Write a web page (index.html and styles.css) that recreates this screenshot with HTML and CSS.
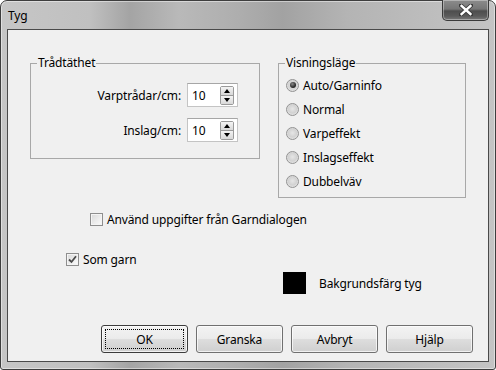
FILE: index.html
```html
<!DOCTYPE html>
<html lang="sv">
<head>
<meta charset="utf-8">
<title>Tyg</title>
<link rel="stylesheet" href="styles.css">
</head>
<body>
<div class="window">
  <div class="titlebar">
    <span class="title">Tyg</span>
    <div class="close">
      <svg width="14" height="12" viewBox="0 0 14 12">
        <path d="M2 1.5 L12 10.5 M12 1.5 L2 10.5" stroke="#3a3a3a" stroke-width="4.2" stroke-linecap="square"/>
        <path d="M2.6 2 L11.4 10 M11.4 2 L2.6 10" stroke="#ffffff" stroke-width="2.4" stroke-linecap="square"/>
      </svg>
    </div>
  </div>
  <div class="client">
    <div class="top-row">
      <fieldset class="group density">
        <legend>Trådtäthet</legend>
        <div class="density-grid">
          <label class="field-label">Varptrådar/cm:</label>
          <div class="spin">
            <span class="spin-value">10</span>
            <div class="spin-btns">
              <span class="spin-btn up"></span>
              <span class="spin-btn down"></span>
            </div>
          </div>
          <label class="field-label">Inslag/cm:</label>
          <div class="spin">
            <span class="spin-value">10</span>
            <div class="spin-btns">
              <span class="spin-btn up"></span>
              <span class="spin-btn down"></span>
            </div>
          </div>
        </div>
      </fieldset>
      <fieldset class="group mode">
        <legend>Visningsläge</legend>
        <div class="radio checked"><span class="radio-dot"></span><span>Auto/Garninfo</span></div>
        <div class="radio"><span class="radio-dot"></span><span>Normal</span></div>
        <div class="radio"><span class="radio-dot"></span><span>Varpeffekt</span></div>
        <div class="radio"><span class="radio-dot"></span><span>Inslagseffekt</span></div>
        <div class="radio"><span class="radio-dot"></span><span>Dubbelväv</span></div>
      </fieldset>
    </div>
    <div class="check use-garn"><span class="check-box"></span><span>Använd uppgifter från Garndialogen</span></div>
    <div class="check som-garn checked">
      <span class="check-box">
        <svg width="9" height="9" viewBox="0 0 9 9"><path d="M1 4.5 L3.5 7 L8 1.2" fill="none" stroke="#4a4a4a" stroke-width="1.8"/></svg>
      </span>
      <span>Som garn</span>
    </div>
    <div class="bg-row"><span class="swatch"></span><span>Bakgrundsfärg tyg</span></div>
    <div class="buttons">
      <button class="btn default"><span class="focus">OK</span></button>
      <button class="btn">Granska</button>
      <button class="btn">Avbryt</button>
      <button class="btn">Hjälp</button>
    </div>
  </div>
</div>
</body>
</html>
```
FILE: styles.css
```css
* { box-sizing: border-box; }
html, body { margin: 0; padding: 0; }
body {
  width: 496px;
  height: 370px;
  overflow: hidden;
  background: #ffffff;
  font-family: "Noto Sans", "Open Sans", sans-serif;
  font-size: 12px;
  letter-spacing: -0.15px;
  color: #000;
}
.window {
  width: 496px;
  height: 370px;
  border: 1px solid #3e3e3e;
  border-radius: 7px 7px 3px 3px;
  background: linear-gradient(90deg, #c6c6c6 0%, #c0c0c0 18%, #a4a4a4 26%, #b9b9b9 36%, #aeaeae 48%, #a2a2a2 57%, #b4b4b4 70%, #bcbcbc 85%, #c4c4c4 100%);
  box-shadow: inset 0 0 0 1px rgba(255,255,255,0.45);
  display: flex;
  flex-direction: column;
  padding: 0 6px 7px 6px;
}
.titlebar {
  height: 28px;
  display: flex;
  justify-content: space-between;
  align-items: flex-start;
}
.title {
  margin-top: 7px;
  padding-left: 1px;
  line-height: 16px;
  font-size: 12px;
  color: #000;
}
.close {
  width: 47px;
  height: 21px;
  margin-top: -1px;
  border: 1px solid #3a3a3a;
  border-top: none;
  border-radius: 0 0 5px 5px;
  background: linear-gradient(180deg, #8c8c8c 0%, #767676 45%, #4e4e4e 55%, #5a5a5a 80%, #7a7a7a 100%);
  box-shadow: inset 0 0 0 1px rgba(255,255,255,0.35);
  display: flex;
  align-items: center;
  justify-content: center;
}
.client {
  flex: 1;
  border: 1px solid #4a4a4a;
  background: #f0f0f0;
  display: flex;
  flex-direction: column;
  padding: 25px 15px 8px 22px;
}
.top-row {
  display: flex;
  align-items: flex-start;
  gap: 18px;
}
fieldset.group {
  margin: 0;
  border: 1px solid #a8a8a8;
  padding: 0 0 0 6px;
  min-width: 0;
}
fieldset.group legend {
  padding: 0 1px;
  line-height: 16px;
  height: 16px;
}
.density {
  width: 230px;
  height: 104px;
}
.mode {
  width: 188px;
  height: 143px;
}
.density-grid {
  display: grid;
  grid-template-columns: 1fr 51px;
  column-gap: 6px;
  row-gap: 11px;
  padding: 12px 21px 0 0;
  align-items: center;
}
.field-label {
  text-align: right;
}
.spin {
  height: 24px;
  background: #fff;
  border: 1px solid #c4c4c4;
  border-top-color: #a6a6a6;
  display: flex;
  align-items: center;
  padding-left: 4px;
}
.spin-value { flex: 1; }
.spin-btns {
  width: 14px;
  height: 19px;
  margin-right: 3px;
  display: flex;
  flex-direction: column;
  border: 1px solid #9a9a9a;
  border-radius: 2px;
}
.spin-btn {
  flex: 1;
  display: flex;
  align-items: center;
  justify-content: center;
  background: linear-gradient(180deg, #f4f4f4, #d8d8d8);
}
.spin-btn.up { border-bottom: 1px solid #9a9a9a; }
.spin-btn::after {
  content: "";
  width: 0;
  height: 0;
  border-left: 3px solid transparent;
  border-right: 3px solid transparent;
}
.spin-btn.up::after { border-bottom: 4px solid #000; }
.spin-btn.down::after { border-top: 4px solid #000; }
.mode legend { margin-left: 0; }
.radio {
  height: 24px;
  display: flex;
  align-items: center;
  gap: 4px;
  padding-left: 1px;
}
.radio:first-of-type { margin-top: 2px; }
.radio-dot {
  width: 13px;
  height: 13px;
  border-radius: 50%;
  border: 1px solid #929292;
  background: radial-gradient(circle at 50% 45%, #e6e6e6 0%, #d2d2d2 50%, #f6f6f6 100%);
  display: flex;
  align-items: center;
  justify-content: center;
}
.radio.checked .radio-dot::after {
  content: "";
  width: 6px;
  height: 6px;
  border-radius: 50%;
  background: radial-gradient(circle at 40% 35%, #8a8a8a 0%, #2c2c2c 60%, #1a1a1a 100%);
}
.check {
  display: flex;
  align-items: center;
  gap: 4px;
  height: 18px;
}
.check-box {
  width: 13px;
  height: 13px;
  border: 1px solid #8e8e8e;
  background: linear-gradient(135deg, #d8d8d8 0%, #eeeeee 60%, #fbfbfb 100%);
  box-shadow: inset 0 0 0 1px #f4f4f4;
  display: flex;
  align-items: center;
  justify-content: center;
}
.use-garn {
  margin-top: 12px;
  margin-left: 60px;
}
.som-garn {
  margin-top: 22px;
  margin-left: 36px;
}
.bg-row {
  margin-top: 4px;
  margin-left: 253px;
  display: flex;
  align-items: center;
  gap: 13px;
}
.swatch {
  width: 23px;
  height: 22px;
  background: #000;
}
.buttons {
  margin-top: auto;
  display: flex;
  justify-content: flex-end;
  gap: 8px;
}
.btn {
  width: 87px;
  height: 28px;
  padding: 0;
  font: inherit;
  letter-spacing: inherit;
  color: #000;
  border: 1px solid #707070;
  border-radius: 3px;
  background: linear-gradient(180deg, #f3f3f3 0%, #ebebeb 48%, #dddddd 52%, #cfcfcf 100%);
  box-shadow: inset 0 0 0 1px rgba(255,255,255,0.7);
  display: flex;
  align-items: center;
  justify-content: center;
}
.btn.default {
  border-color: #3c3c3c;
  padding: 3px;
}
.btn.default .focus {
  width: 100%;
  height: 100%;
  border: 1px dotted #000;
  display: flex;
  align-items: center;
  justify-content: center;
}
```
